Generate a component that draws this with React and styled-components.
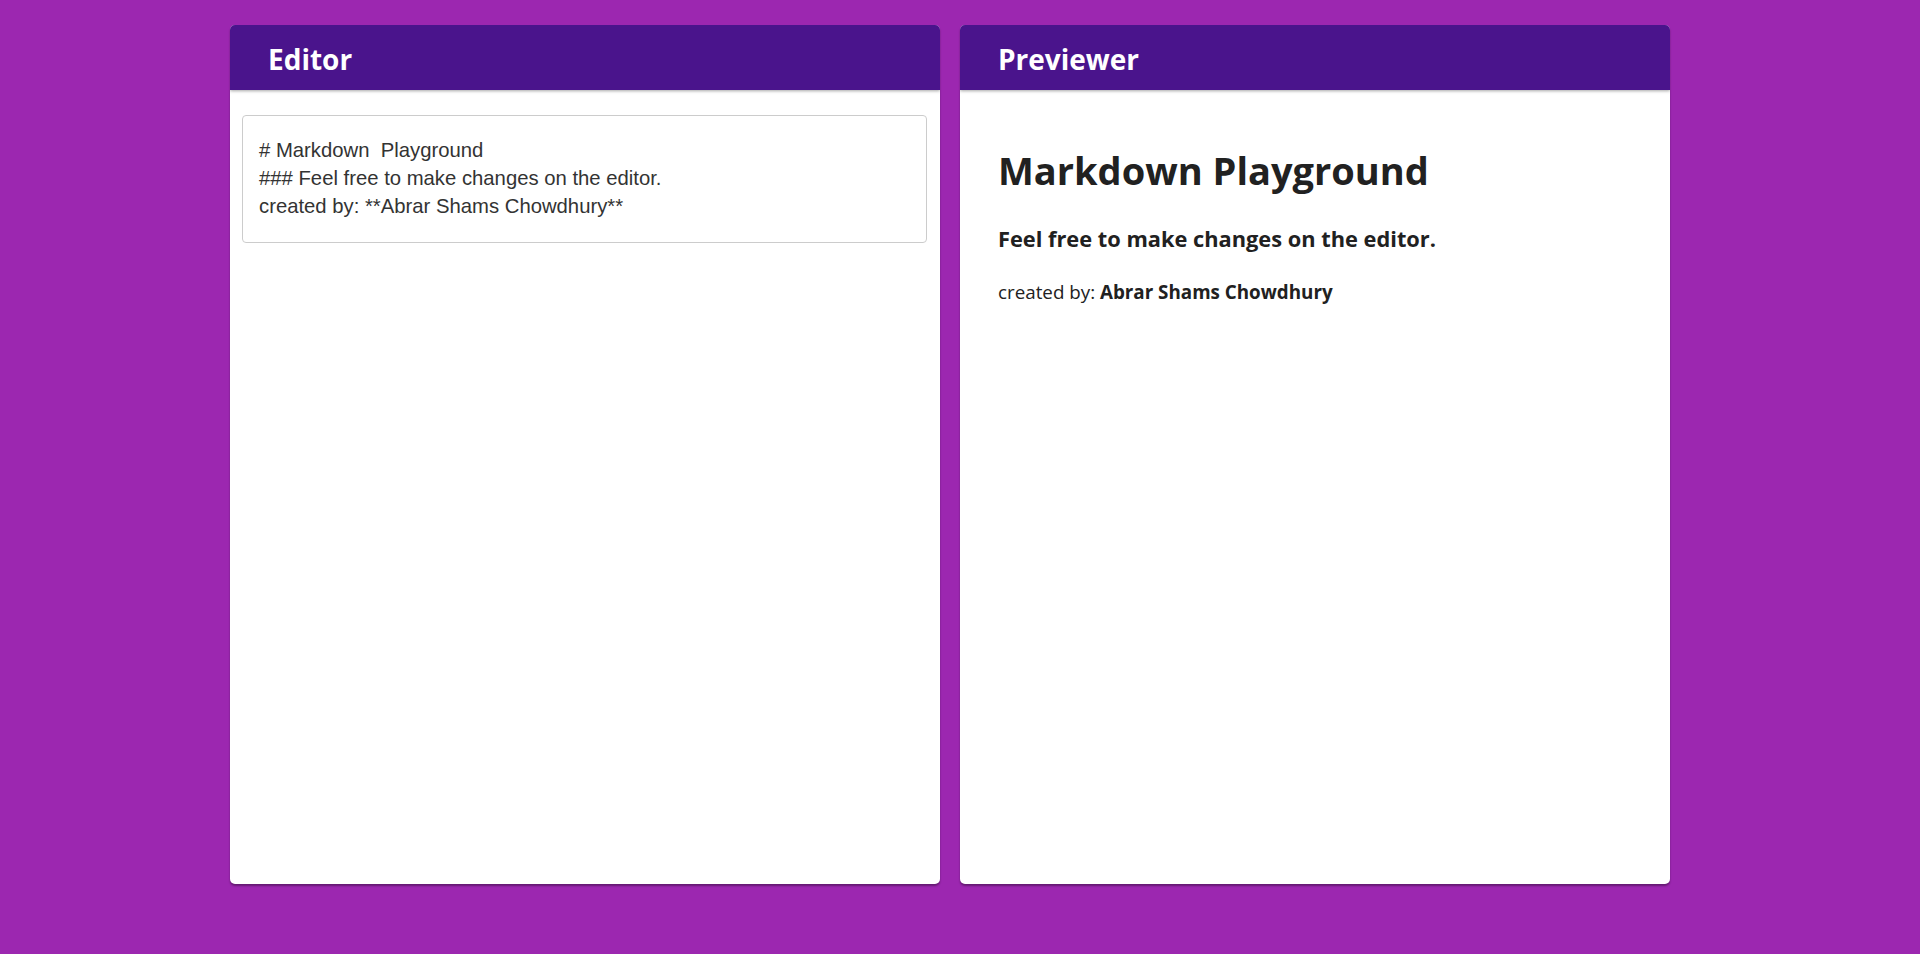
import React, { useState } from "react";
import styled, { createGlobalStyle } from "styled-components";

const GlobalStyle = createGlobalStyle`
  * { box-sizing: border-box; }
  body {
    margin: 0;
    background: #9c27b0;
    font-family: "Open Sans", "Noto Sans", sans-serif;
  }
`;

const Page = styled.div`
  display: flex;
  justify-content: center;
  gap: 20px;
  padding: 25px 20px 104px 0;
`;

const Panel = styled.section`
  width: 710px;
  height: 90vh;
  background: #ffffff;
  border-radius: 5px;
  box-shadow: 0 2px 2px rgba(0, 0, 0, 0.35);
  display: flex;
  flex-direction: column;
  overflow: hidden;
`;

const PanelHeader = styled.header`
  height: 65px;
  flex: none;
  background: #4a148c;
  color: #ffffff;
  display: flex;
  align-items: center;
  padding: 3px 38px 0;
  box-shadow: 0 1px 3px rgba(0, 0, 0, 0.35);
  position: relative;
  z-index: 1;
`;

const Title = styled.h2`
  margin: 0;
  font-size: 28px;
  font-weight: 700;
`;

const EditorBody = styled.div`
  padding: 25px 13px 0 12px;
`;

const TextArea = styled.textarea`
  display: block;
  width: 100%;
  height: 128px;
  border: 1px solid #cccccc;
  border-radius: 4px;
  padding: 19.5px 16px;
  font-family: "Liberation Sans", Arial, sans-serif;
  font-size: 20.3px;
  line-height: 28.3px;
  color: #333333;
  resize: none;
  outline: none;
  background: #ffffff;
  overflow: hidden;
`;

const Preview = styled.div`
  padding: 0 38px;
  color: #212121;
`;

const H1 = styled.h1`
  margin: 56.3px 0 0;
  font-size: 38px;
  line-height: 48px;
  font-weight: 700;
`;

const H3 = styled.h3`
  margin: 31.5px 0 0;
  font-size: 21.8px;
  line-height: 26.4px;
  font-weight: 700;
`;

const Para = styled.p`
  margin: 27.6px 0 0;
  font-size: 18.8px;
  line-height: 24px;
  strong { font-weight: 700; }
`;

const initial = `# Markdown  Playground
### Feel free to make changes on the editor.
created by: **Abrar Shams Chowdhury**`;

export default function App() {
  const [text, setText] = useState(initial);
  return (
    <>
      <GlobalStyle />
      <Page>
        <Panel>
          <PanelHeader>
            <Title>Editor</Title>
          </PanelHeader>
          <EditorBody>
            <TextArea value={text} onChange={(e) => setText(e.target.value)} />
          </EditorBody>
        </Panel>
        <Panel>
          <PanelHeader>
            <Title>Previewer</Title>
          </PanelHeader>
          <Preview>
            <H1>Markdown Playground</H1>
            <H3>Feel free to make changes on the editor.</H3>
            <Para>
              created by: <strong>Abrar Shams Chowdhury</strong>
            </Para>
          </Preview>
        </Panel>
      </Page>
    </>
  );
}
